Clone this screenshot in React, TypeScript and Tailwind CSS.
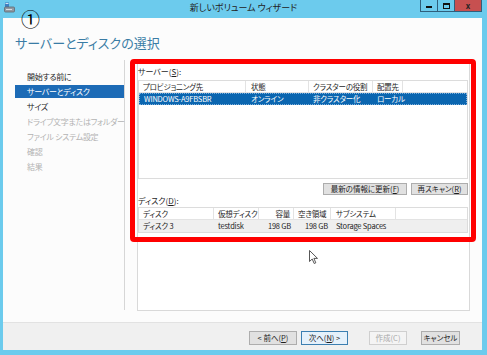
import React from "react";

const font = "font-['Noto_Sans_CJK_JP','Noto_Sans',sans-serif] [font-feature-settings:'palt']";

const navItems = [
  { label: "開始する前に", state: "normal" },
  { label: "サーバーとディスク", state: "active" },
  { label: "サイズ", state: "normal" },
  { label: "ドライブ文字またはフォルダー", state: "disabled" },
  { label: "ファイル システム設定", state: "disabled" },
  { label: "確認", state: "disabled" },
  { label: "結果", state: "disabled" },
];

const Btn: React.FC<{ w: string; children: React.ReactNode; variant?: "default" | "focus" | "disabled" }> = ({
  w,
  children,
  variant = "default",
}) => {
  let cls = "border-[#adadad] bg-[#e1e1e1] text-[#1e1e1e]";
  if (variant === "focus") cls = "border-[#3c7fb1] bg-[#e5f1fb] text-[#1e1e1e]";
  if (variant === "disabled") cls = "border-[#cfcfcf] bg-[#f4f4f4] text-[#a8a8a8]";
  return (
    <div className={`${w} h-full border flex items-center justify-center leading-none whitespace-nowrap ${cls}`}>
      {children}
    </div>
  );
};

const TitleIcon = () => (
  <svg width="11" height="11" viewBox="0 0 11 11">
    <rect x="1" y="0.5" width="4" height="5" fill="#3f7fc0" />
    <rect x="1.5" y="1" width="3" height="1" fill="#cfe3f5" />
    <rect x="0.5" y="5" width="10" height="5" rx="1" fill="#8f99a3" stroke="#5f6870" strokeWidth="0.8" />
    <rect x="2" y="7" width="6" height="1" fill="#d8dde2" />
  </svg>
);

const Cursor = () => (
  <svg width="10" height="15" viewBox="0 0 10 15" className="absolute left-[309px] top-[250px]">
    <path d="M0.5 0.5 L0.5 11.5 L3.2 9 L5.2 13.5 L6.8 12.8 L4.9 8.4 L8.5 8.4 Z" fill="#fff" stroke="#444" strokeWidth="0.9" strokeLinejoin="round" />
  </svg>
);

const cell = "whitespace-nowrap overflow-hidden";

export default function App() {
  return (
    <div className={`relative w-[487px] h-[355px] bg-[#6ccbed] flex flex-col overflow-hidden text-[8px] text-[#1e1e1e] ${font}`}>
      {/* title bar */}
      <div className="h-[18px] flex items-start shrink-0">
        <div className="w-[60px] pl-[4px] pt-[2px]">
          <TitleIcon />
        </div>
        <div className="flex-1 text-center text-[9px] leading-[16px] text-[#222]">新しいボリューム ウィザード</div>
        <div className="w-[60px] flex justify-end pr-[5px]">
          <div className="flex h-[12px] border border-t-0 border-[#2f5f7c]">
            <div className="w-[17px] flex items-end justify-center pb-[3px] border-r border-[#2f5f7c]">
              <div className="w-[6px] h-[2px] bg-[#111]" />
            </div>
            <div className="w-[17px] flex items-center justify-center border-r border-[#2f5f7c]">
              <div className="w-[7px] h-[6px] border border-t-[2px] border-[#111]" />
            </div>
            <div className="w-[26px] bg-[#c75050] flex items-center justify-center text-[8px] font-bold leading-none text-[#222]">
              x
            </div>
          </div>
        </div>
      </div>

      {/* client area */}
      <div className="flex-1 ml-[3px] mr-[5px] mb-[5px] bg-[#fcfcfc] flex flex-col">
        <div className="h-[42px] pl-[12px] pt-[16px] text-[13px] leading-[18px] text-[#3a7ca5] shrink-0">
          サーバーとディスクの選択
        </div>

        <div className="h-[262px] flex shrink-0">
          {/* nav */}
          <div className="w-[122px] h-[250px] border-r border-[#d6d6d6] pt-[9px] flex flex-col tracking-[-0.3px]">
            {navItems.map((n) =>
              n.state === "active" ? (
                <div key={n.label} className="h-[15px] py-[1px] pl-[12px]">
                  <div className="h-[13px] bg-[#1d6bb6] text-white pl-[12px] leading-[13px]">{n.label}</div>
                </div>
              ) : (
                <div
                  key={n.label}
                  className={`h-[15px] pl-[24px] leading-[15px] whitespace-nowrap ${n.state === "disabled" ? "text-[#b3b3b3]" : "text-[#1e1e1e]"}`}
                >
                  {n.label}
                </div>
              )
            )}
          </div>

          {/* content */}
          <div className="pl-[12px] pt-[3px]">
            <div className="relative w-[333px] h-[248px] border border-[#d9d9d9] bg-white">
              <div className="flex flex-col pt-[1px]">
                <div className="h-[14px] leading-[14px]">サーバー(<span className="underline">S</span>):</div>
                <div className="mt-[1px] w-[330px] h-[99px] border border-[#dcdcdc] bg-white flex flex-col text-[7.5px] tracking-[-0.2px]">
                  <div className="h-[12px] flex border-b border-[#e3e3e3] leading-[11px]">
                    <div className={`w-[107px] pl-[4px] border-r border-[#e3e3e3] ${cell}`}>プロビジョニング先</div>
                    <div className={`w-[63px] pl-[5px] border-r border-[#e3e3e3] ${cell}`}>状態</div>
                    <div className={`w-[64px] pl-[4px] border-r border-[#e3e3e3] ${cell}`}>クラスターの役割</div>
                    <div className={`w-[30px] pl-[4px] border-r border-[#e3e3e3] ${cell}`}>配置先</div>
                    <div className="flex-1" />
                  </div>
                  <div className="h-[12px] flex bg-[#0b66b0] text-white leading-[10px] border border-dotted border-[#7fb0dc]">
                    <div className={`w-[106px] pl-[4px] ${cell}`}>WINDOWS-A9FBSBR</div>
                    <div className={`w-[63px] pl-[5px] ${cell}`}>オンライン</div>
                    <div className={`w-[64px] pl-[4px] ${cell}`}>非クラスター化</div>
                    <div className={`w-[40px] pl-[4px] ${cell}`}>ローカル</div>
                  </div>
                </div>

                <div className="mt-[4px] h-[12px] w-[330px] flex justify-end gap-[4px] text-[7.5px]">
                  <Btn w="w-[84px]">
                    最新の情報に更新(<span className="underline">F</span>)
                  </Btn>
                  <Btn w="w-[57px]">
                    再スキャン(<span className="underline">R</span>)
                  </Btn>
                </div>

                <div className="h-[12px] leading-[12px]">ディスク(<span className="underline">D</span>):</div>
                <div className="w-[330px] border border-[#dcdcdc] flex flex-col text-[7.5px] tracking-[-0.2px]">
                  <div className="h-[12px] flex border-b border-[#e3e3e3] leading-[11px] bg-white">
                    <div className={`w-[75px] pl-[4px] border-r border-[#e3e3e3] ${cell}`}>ディスク</div>
                    <div className={`w-[45px] pl-[4px] border-r border-[#e3e3e3] ${cell}`}>仮想ディスク</div>
                    <div className={`w-[35px] pr-[3px] text-right border-r border-[#e3e3e3] ${cell}`}>容量</div>
                    <div className={`w-[37px] pl-[4px] border-r border-[#e3e3e3] ${cell}`}>空き領域</div>
                    <div className={`w-[65px] pl-[5px] border-r border-[#e3e3e3] ${cell}`}>サブシステム</div>
                    <div className="flex-1" />
                  </div>
                  <div className="h-[12px] flex bg-[#efefef] leading-[12px]">
                    <div className={`w-[75px] pl-[4px] ${cell}`}>ディスク 3</div>
                    <div className={`w-[45px] pl-[4px] ${cell}`}>testdisk</div>
                    <div className={`w-[35px] pr-[3px] text-right ${cell}`}>198 GB</div>
                    <div className={`w-[37px] pr-[3px] text-right ${cell}`}>198 GB</div>
                    <div className={`w-[65px] pl-[5px] ${cell}`}>Storage Spaces</div>
                  </div>
                </div>
              </div>

              {/* red highlight annotation */}
              <div className="absolute -left-[8px] -top-[5px] w-[346px] h-[183px] border-[5px] border-[#ff0000] rounded-[4px] pointer-events-none" />
            </div>
          </div>
        </div>

        {/* footer */}
        <div className="flex-1 bg-[#f0f0f0] border-t border-[#e2e2e2] pt-[8px] pr-[22px]">
          <div className="h-[14px] flex justify-end text-[7.5px]">
            <Btn w="w-[48px]">
              &lt; 前へ(<span className="underline">P</span>)
            </Btn>
            <div className="w-[4px]" />
            <Btn w="w-[47px]" variant="focus">
              次へ(<span className="underline">N</span>) &gt;
            </Btn>
            <div className="w-[21px]" />
            <Btn w="w-[38px]" variant="disabled">
              作成(C)
            </Btn>
            <div className="w-[14px]" />
            <Btn w="w-[39px]">キャンセル</Btn>
          </div>
        </div>
      </div>

      {/* annotation number */}
      <div className="absolute left-[21px] top-[8px] text-[19px] leading-[22px] text-black">①</div>
      <Cursor />
    </div>
  );
}
